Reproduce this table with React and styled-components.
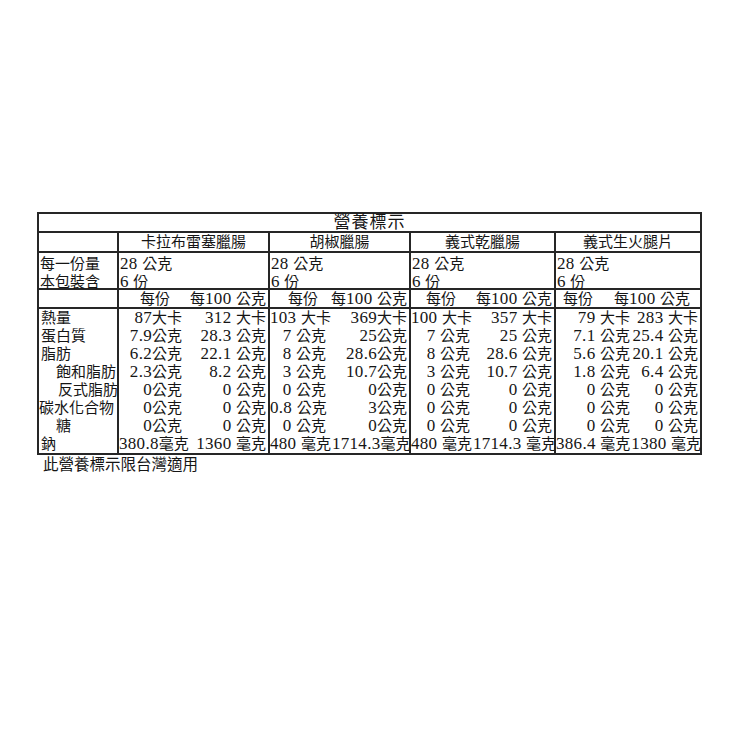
import React from 'react';
import styled, { createGlobalStyle } from 'styled-components';

const GlobalStyle = createGlobalStyle`
  body {
    margin: 0;
    background: #ffffff;
    color: #151515;
    font-family: "Liberation Serif", "Noto Sans CJK TC", serif;
  }
`;

// sub = width of the per-serving sub column, gap / pad place the column heading
const products = [
  {
    name: '卡拉布雷塞臘腸', sub: 66, gap: 20, pad: 2,
    values: [
      ['87大卡', '312 大卡'],
      ['7.9公克', '28.3 公克'],
      ['6.2公克', '22.1 公克'],
      ['2.3公克', '8.2 公克'],
      ['0公克', '0 公克'],
      ['0公克', '0 公克'],
      ['0公克', '0 公克'],
      ['380.8毫克', '1360 毫克'],
    ],
  },
  {
    name: '胡椒臘腸', sub: 59, gap: 13, pad: 2,
    values: [
      ['103 大卡', '369大卡'],
      ['7 公克', '25公克'],
      ['8 公克', '28.6公克'],
      ['3 公克', '10.7公克'],
      ['0 公克', '0公克'],
      ['0.8 公克', '3公克'],
      ['0 公克', '0公克'],
      ['480 毫克', '1714.3毫克'],
    ],
  },
  {
    name: '義式乾臘腸', sub: 62, gap: 20, pad: 2,
    values: [
      ['100 大卡', '357 大卡'],
      ['7 公克', '25 公克'],
      ['8 公克', '28.6 公克'],
      ['3 公克', '10.7 公克'],
      ['0 公克', '0 公克'],
      ['0 公克', '0 公克'],
      ['0 公克', '0 公克'],
      ['480 毫克', '1714.3 毫克'],
    ],
  },
  {
    name: '義式生火腿片', sub: 77, gap: 21, pad: 10,
    values: [
      ['79 大卡', '283 大卡'],
      ['7.1 公克', '25.4 公克'],
      ['5.6 公克', '20.1 公克'],
      ['1.8 公克', '6.4 公克'],
      ['0 公克', '0 公克'],
      ['0 公克', '0 公克'],
      ['0 公克', '0 公克'],
      ['386.4 毫克', '1380 毫克'],
    ],
  },
];

const labels = [
  { text: '熱量' },
  { text: '蛋白質' },
  { text: '脂肪' },
  { text: '飽和脂肪', indent: 17 },
  { text: '反式脂肪', indent: 19 },
  { text: '碳水化合物', indent: 0 },
  { text: '糖', indent: 17 },
  { text: '鈉' },
];

const LINE = '2px solid #262626';

const Page = styled.div`
  padding: 212px 0 0 37px;
`;

const Table = styled.div`
  width: 665px;
  box-sizing: border-box;
  border: ${LINE};
  font-size: 15px;
  line-height: 18px;
`;

const Title = styled.div`
  height: 19px;
  box-sizing: border-box;
  border-bottom: ${LINE};
  text-align: center;
  font-size: 17px;
  line-height: 17px;
  letter-spacing: 1px;
`;

const Row = styled.div`
  display: grid;
  grid-template-columns: 78px 151px 141px 145px 1fr;
  box-sizing: border-box;
  height: ${(p) => p.$h}px;
  border-bottom: ${(p) => (p.$line ? LINE : 'none')};
  & > *:not(:first-child) {
    border-left: ${LINE};
  }
`;

const NameCell = styled.div`
  text-align: center;
  line-height: 19px;
`;

const ServeCell = styled.div`
  padding: 2px 0 0 1px;
  line-height: 18px;
  white-space: pre;
`;

const Label = styled.div`
  padding-left: ${(p) => p.$indent ?? 2}px;
  white-space: nowrap;
`;

const Heading = styled.div`
  display: flex;
  justify-content: flex-end;
  gap: ${(p) => p.$gap}px;
  padding-right: ${(p) => p.$pad}px;
  line-height: 18px;
  white-space: pre;
`;

const Pair = styled.div`
  display: flex;
  white-space: pre;
`;

const First = styled.div`
  flex: 0 0 ${(p) => p.$w - 2}px;
  text-align: right;
  padding-right: 1px;
  box-sizing: border-box;
`;

const Second = styled.div`
  flex: 1;
  text-align: right;
  padding-right: 2px;
`;

const Num = styled.span`
  font-size: 17px;
  letter-spacing: 0.3px;
`;

const Footer = styled.div`
  padding: 1px 0 0 6px;
  font-size: 15.5px;
  line-height: 18px;
`;

const Val = ({ text }) => (
  <>
    {text.split(/([\d.]+\s?)/).map((part, i) =>
      /[\d]/.test(part) ? <Num key={i}>{part}</Num> : part
    )}
  </>
);

export default function App() {
  return (
    <Page>
      <GlobalStyle />
      <Table>
        <Title>營養標示</Title>
        <Row $h={20} $line>
          <div />
          {products.map((p) => (
            <NameCell key={p.name}>{p.name}</NameCell>
          ))}
        </Row>
        <Row $h={37} $line>
          <ServeCell>{'每一份量\n本包裝含'}</ServeCell>
          {products.map((p) => (
            <ServeCell key={p.name}>
              <Val text={'28 公克'} />
              {'\n'}
              <Val text={'6 份'} />
            </ServeCell>
          ))}
        </Row>
        <Row $h={19} $line>
          <div />
          {products.map((p) => (
            <Heading key={p.name} $gap={p.gap} $pad={p.pad}>
              <span>每份</span>
              <span><Val text="每100 公克" /></span>
            </Heading>
          ))}
        </Row>
        {labels.map((l, i) => (
          <Row $h={18} key={l.text}>
            <Label $indent={l.indent}>{l.text}</Label>
            {products.map((p) => (
              <Pair key={p.name}>
                <First $w={p.sub}><Val text={p.values[i][0]} /></First>
                <Second><Val text={p.values[i][1]} /></Second>
              </Pair>
            ))}
          </Row>
        ))}
      </Table>
      <Footer>此營養標示限台灣適用</Footer>
    </Page>
  );
}
